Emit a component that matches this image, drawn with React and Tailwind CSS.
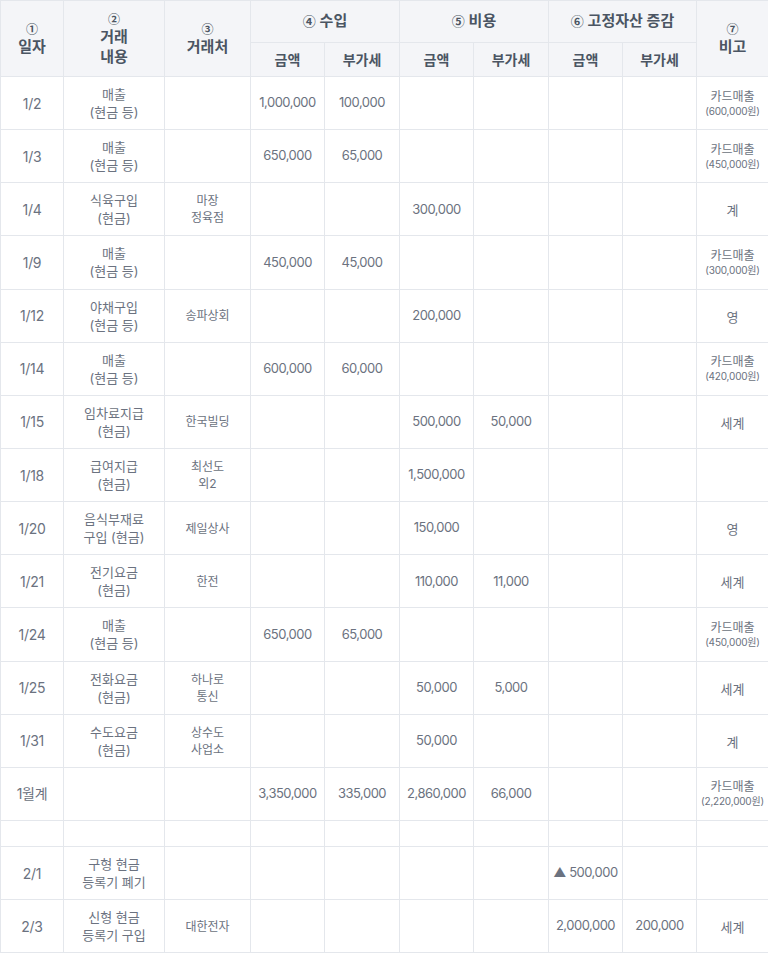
const rows = [
  { d: "1/2", c: ["매출", "(현금 등)"], v: [], a: ["1,000,000", "100,000", "", "", "", ""], n: ["카드매출", "(600,000원)"] },
  { d: "1/3", c: ["매출", "(현금 등)"], v: [], a: ["650,000", "65,000", "", "", "", ""], n: ["카드매출", "(450,000원)"] },
  { d: "1/4", c: ["식육구입", "(현금)"], v: ["마장", "정육점"], a: ["", "", "300,000", "", "", ""], n: ["계"] },
  { d: "1/9", c: ["매출", "(현금 등)"], v: [], a: ["450,000", "45,000", "", "", "", ""], n: ["카드매출", "(300,000원)"] },
  { d: "1/12", c: ["야채구입", "(현금 등)"], v: ["송파상회"], a: ["", "", "200,000", "", "", ""], n: ["영"] },
  { d: "1/14", c: ["매출", "(현금 등)"], v: [], a: ["600,000", "60,000", "", "", "", ""], n: ["카드매출", "(420,000원)"] },
  { d: "1/15", c: ["임차료지급", "(현금)"], v: ["한국빌딩"], a: ["", "", "500,000", "50,000", "", ""], n: ["세계"] },
  { d: "1/18", c: ["급여지급", "(현금)"], v: ["최선도", "외2"], a: ["", "", "1,500,000", "", "", ""], n: [] },
  { d: "1/20", c: ["음식부재료", "구입 (현금)"], v: ["제일상사"], a: ["", "", "150,000", "", "", ""], n: ["영"] },
  { d: "1/21", c: ["전기요금", "(현금)"], v: ["한전"], a: ["", "", "110,000", "11,000", "", ""], n: ["세계"] },
  { d: "1/24", c: ["매출", "(현금 등)"], v: [], a: ["650,000", "65,000", "", "", "", ""], n: ["카드매출", "(450,000원)"] },
  { d: "1/25", c: ["전화요금", "(현금)"], v: ["하나로", "통신"], a: ["", "", "50,000", "5,000", "", ""], n: ["세계"] },
  { d: "1/31", c: ["수도요금", "(현금)"], v: ["상수도", "사업소"], a: ["", "", "50,000", "", "", ""], n: ["계"] },
  { d: "1월계", c: [], v: [], a: ["3,350,000", "335,000", "2,860,000", "66,000", "", ""], n: ["카드매출", "(2,220,000원)"] },
  { empty: true },
  { d: "2/1", c: ["구형 현금", "등록기 폐기"], v: [], a: ["", "", "", "", "▲ 500,000", ""], n: [] },
  { d: "2/3", c: ["신형 현금", "등록기 구입"], v: ["대한전자"], a: ["", "", "", "", "2,000,000", "200,000"], n: ["세계"] },
];

// circled numbers come from the CJK font, smaller than Inter's
const circ = "font-['Noto_Sans_CJK_KR'] font-bold";

function Note({ n }) {
  if (n.length === 2) {
    return (
      <div className="flex flex-col items-center">
        <span className="text-[12px] leading-[16px]">{n[0]}</span>
        <span className="text-[10px] leading-[13px] tracking-[-0.2px]">{n[1]}</span>
      </div>
    );
  }
  return <span className="text-[13px]">{n[0]}</span>;
}

export default function App() {
  const th = "border border-[#e4e7ec] bg-[#f4f5f8] text-[#4b5563] font-semibold text-center align-middle";
  const td = "border border-[#e4e7ec] text-center align-middle text-[#6b7280]";
  return (
    <div className="w-[768px] bg-white" style={{ fontFamily: 'Inter, "Noto Sans CJK KR", sans-serif' }}>
      <table className="w-full table-fixed border-collapse">
        <colgroup>
          <col className="w-[63px]" />
          <col className="w-[101px]" />
          <col className="w-[86px]" />
          <col className="w-[74px]" />
          <col className="w-[75px]" />
          <col className="w-[74px]" />
          <col className="w-[75px]" />
          <col className="w-[74px]" />
          <col className="w-[74px]" />
          <col className="w-[72px]" />
        </colgroup>
        <thead>
          <tr className="h-[42px]">
            <th rowSpan={2} className={th}>
              <div className={circ + " text-[12px] leading-[16px]"}>①</div>
              <div className="text-[15px] leading-[20px]">일자</div>
            </th>
            <th rowSpan={2} className={th}>
              <div className={circ + " text-[12px] leading-[16px]"}>②</div>
              <div className="text-[15px] leading-[20px]">거래</div>
              <div className="text-[15px] leading-[20px]">내용</div>
            </th>
            <th rowSpan={2} className={th}>
              <div className={circ + " text-[12px] leading-[16px]"}>③</div>
              <div className="text-[15px] leading-[20px]">거래처</div>
            </th>
            <th colSpan={2} className={th + " text-[15px]"}>
              <span className={circ + " text-[13px]"}>④</span> 수입
            </th>
            <th colSpan={2} className={th + " text-[15px]"}>
              <span className={circ + " text-[13px]"}>⑤</span> 비용
            </th>
            <th colSpan={2} className={th + " text-[15px]"}>
              <span className={circ + " text-[13px]"}>⑥</span> 고정자산 증감
            </th>
            <th rowSpan={2} className={th}>
              <div className={circ + " text-[12px] leading-[16px]"}>⑦</div>
              <div className="text-[15px] leading-[20px]">비고</div>
            </th>
          </tr>
          <tr className="h-[34px]">
            {["금액", "부가세", "금액", "부가세", "금액", "부가세"].map((t, i) => (
              <th key={i} className={th + " text-[14px] font-medium"}>{t}</th>
            ))}
          </tr>
        </thead>
        <tbody>
          {rows.map((r, i) =>
            r.empty ? (
              <tr key={i} className="h-[26px]">
                {Array.from({ length: 10 }).map((_, j) => (
                  <td key={j} className={td}></td>
                ))}
              </tr>
            ) : (
              <tr key={i} className="h-[53.15px]">
                <td className={td + " text-[14px] tracking-[-0.3px]"}>{r.d}</td>
                <td className={td + " text-[13px] leading-[18px]"}>
                  {r.c.map((t, k) => (
                    <div key={k}>{t}</div>
                  ))}
                </td>
                <td className={td + " text-[12px] leading-[17px]"}>
                  {r.v.map((t, k) => (
                    <div key={k}>{t}</div>
                  ))}
                </td>
                {r.a.map((t, k) => (
                  <td key={k} className={td + " text-[13px] tracking-[-0.5px]"}>{t}</td>
                ))}
                <td className={td}>{r.n.length > 0 && <Note n={r.n} />}</td>
              </tr>
            )
          )}
        </tbody>
      </table>
    </div>
  );
}
